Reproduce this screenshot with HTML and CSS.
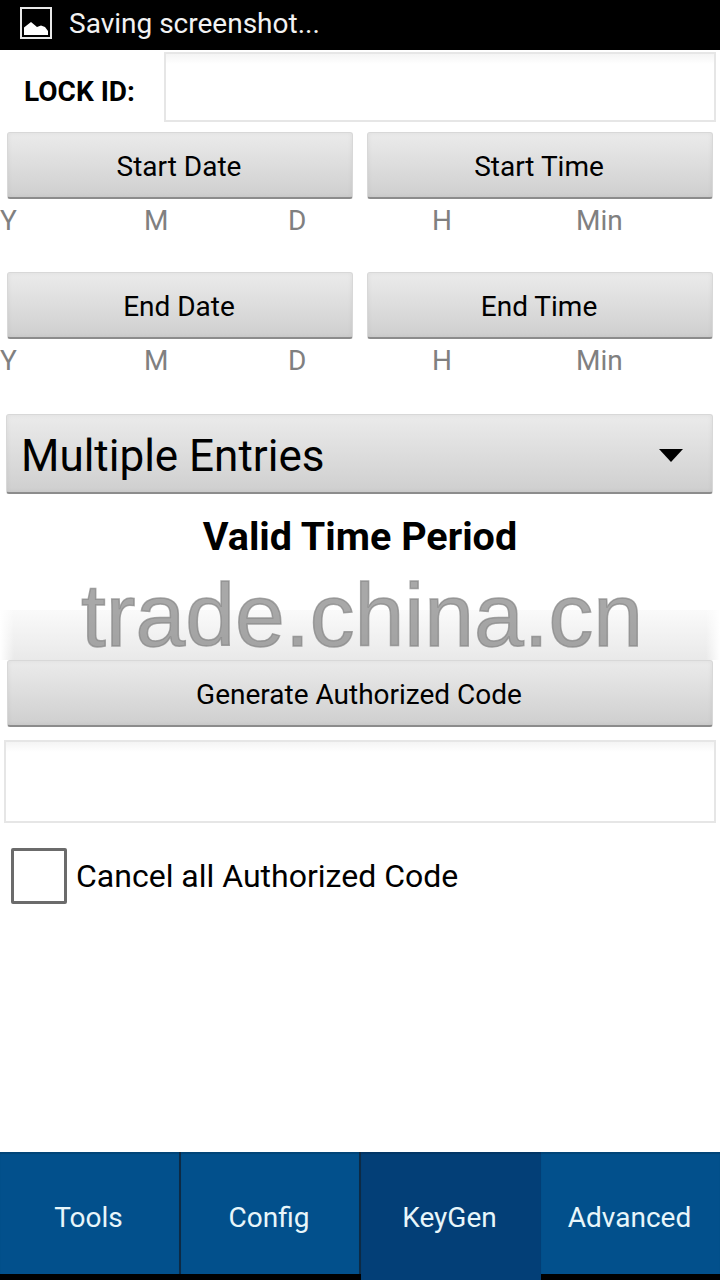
FILE: index.html
```html
<!DOCTYPE html>
<html lang="en">
<head>
    <meta charset="UTF-8">
    <meta name="viewport" content="width=device-width, initial-scale=1.0">
    <title>KeyGen</title>
    <link rel="stylesheet" href="styles.css">
</head>
<body>
    <div class="statusbar">
        <svg class="status-icon" width="32" height="32" viewBox="0 0 32 32">
            <rect x="1" y="1" width="30" height="30" fill="none" stroke="#e8e8e8" stroke-width="2"/>
            <path d="M4 28V20.500L11 15L17 20L21 18.500L25 20L28 24V28Z" fill="#fff"/>
        </svg>
        <span>Saving screenshot...</span>
    </div>

    <div class="lock-row">
        <label class="lock-label">LOCK ID:</label>
        <div class="field lock-field"></div>
    </div>

    <div class="btn-row">
        <div class="button">Start Date</div>
        <div class="button">Start Time</div>
    </div>
    <div class="date-parts">
        <span>Y</span><span>M</span><span>D</span><span>H</span><span>Min</span>
    </div>

    <div class="btn-row end-row">
        <div class="button">End Date</div>
        <div class="button">End Time</div>
    </div>
    <div class="date-parts">
        <span>Y</span><span>M</span><span>D</span><span>H</span><span>Min</span>
    </div>

    <div class="spinner">
        <span>Multiple Entries</span>
        <div class="arrow"></div>
    </div>

    <h2 class="period">Valid Time Period</h2>

    <div class="band"></div>
    <div class="watermark">trade.china.cn</div>

    <div class="btn-row end-row">
        <div class="button">Generate Authorized Code</div>
    </div>

    <div class="field code-field"></div>

    <div class="check-row">
        <div class="checkbox"></div>
        <span>Cancel all Authorized Code</span>
    </div>

    <div class="tabs">
        <div class="tab">Tools</div>
        <div class="tab">Config</div>
        <div class="tab active">KeyGen</div>
        <div class="tab">Advanced</div>
    </div>
</body>
</html>
```

FILE: styles.css
```css
* {
    box-sizing: border-box;
}
html, body {
    margin: 0;
    padding: 0;
}
body {
    position: relative;
    width: 720px;
    height: 1280px;
    overflow: hidden;
    display: flex;
    flex-direction: column;
    background-color: #fff;
    color: #000;
    font-family: Roboto, "Liberation Sans", sans-serif;
}
.statusbar {
    height: 50px;
    flex: none;
    display: flex;
    align-items: center;
    padding: 0 0 4px 20px;
    background-color: #000;
    color: #f2f2f2;
    font-size: 28px;
}
.status-icon {
    margin-right: 17px;
}
.lock-row {
    height: 72px;
    flex: none;
    display: flex;
    align-items: center;
    padding: 1px 4px 0 24px;
}
.lock-label {
    width: 140px;
    margin-top: 10px;
    font-size: 28px;
    font-weight: bold;
}
.field {
    background: linear-gradient(#f4f4f4, #fff 10px);
    border: 2px solid #e6e6e6;
}
.lock-field {
    flex: 1;
    height: 70px;
}
.btn-row {
    flex: none;
    display: flex;
    gap: 14px;
    padding: 0 7px;
    margin-top: 10px;
}
.end-row {
    margin-top: 0;
}
.button {
    flex: 1;
    height: 67px;
    display: flex;
    align-items: center;
    justify-content: center;
    padding: 2px 2px 0 0;
    background: linear-gradient(#ebebeb, #cfcfcf);
    border: 1px solid #d8d8d8;
    border-bottom: 2px solid #8c8c8c;
    border-radius: 3px;
    box-shadow: inset 0 0 5px rgba(0, 0, 0, 0.06);
    font-size: 28px;
}
.date-parts {
    height: 73px;
    flex: none;
    display: grid;
    grid-template-columns: repeat(5, 144px);
    padding-top: 5px;
    color: #808080;
    font-size: 28px;
    line-height: 34px;
}
.spinner {
    height: 80px;
    flex: none;
    margin: 2px 7px 0 6px;
    display: flex;
    align-items: center;
    justify-content: space-between;
    padding: 4px 29px 0 14px;
    background: linear-gradient(#ebebeb, #cfcfcf);
    border: 1px solid #d8d8d8;
    border-bottom: 2px solid #8c8c8c;
    border-radius: 3px;
    box-shadow: inset 0 0 5px rgba(0, 0, 0, 0.06);
    font-size: 44px;
}
.arrow {
    width: 0;
    height: 0;
    border-left: 12px solid transparent;
    border-right: 12px solid transparent;
    border-top: 13px solid #000;
}
.period {
    height: 84px;
    flex: none;
    margin: 0;
    display: flex;
    align-items: center;
    justify-content: center;
    font-size: 39.500px;
    font-weight: bold;
}
.band {
    height: 50px;
    flex: none;
    margin-top: 32px;
    background:
        linear-gradient(90deg, #fff, rgba(255, 255, 255, 0) 14px, rgba(255, 255, 255, 0) 706px, #fff),
        linear-gradient(#fafafa, #e9e9e9);
}
/* sits over the band, stamped on the screenshot */
.watermark {
    position: absolute;
    left: 0;
    right: 0;
    top: 575px;
    padding-left: 4px;
    text-align: center;
    font-family: "Liberation Sans", Arial, sans-serif;
    font-size: 89.500px;
    line-height: 80px;
    color: rgba(135, 135, 135, 0.72);
    -webkit-text-stroke: 1.500px rgba(135, 135, 135, 0.72);
}
.code-field {
    height: 83px;
    flex: none;
    margin: 13px 4px 0;
}
.check-row {
    flex: none;
    display: flex;
    align-items: center;
    margin: 25px 0 0 11px;
    font-size: 32px;
}
.checkbox {
    width: 56px;
    height: 56px;
    margin-right: 9px;
    border: 3px solid #6b6b6b;
    border-radius: 2px;
}
.tabs {
    margin-top: auto;
    height: 128px;
    flex: none;
    display: grid;
    grid-template-columns: 181px 180px 180px 1fr;
    background-color: #000;
}
.tab {
    height: 122px;
    display: flex;
    align-items: center;
    justify-content: center;
    padding: 8px 2px 0 0;
    background-color: #02508c;
    border-right: 2px solid #0d2a44;
    box-shadow: inset 0 2px 1px rgba(0, 0, 0, 0.15);
    color: #e8f6fa;
    font-size: 28px;
}
.tab.active {
    height: 128px;
    padding-bottom: 6px;
    padding-right: 3px;
    background-color: #033f77;
    border-right: none;
}
.tab:nth-child(4) {
    border-right: none;
}
```
